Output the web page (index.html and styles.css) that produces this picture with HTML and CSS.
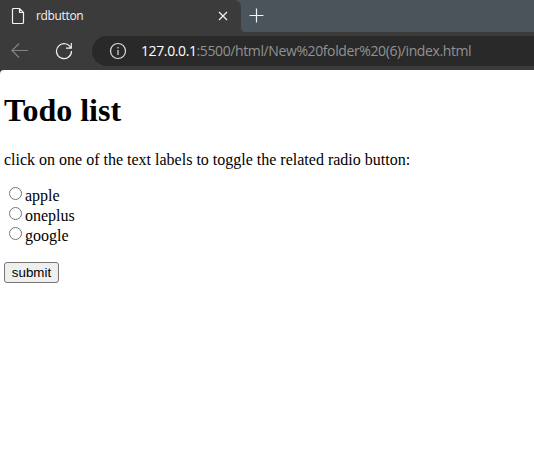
FILE: index.html
```html
<!DOCTYPE html>
<html lang="en">
<head>
<meta charset="utf-8">
<title>rdbutton</title>
<link rel="stylesheet" href="styles.css">
</head>
<body>
<header class="browser">
  <div class="tabs">
    <div class="tab">
      <svg class="file" width="14" height="18" viewBox="0 0 14 18"><path d="M2.5 1.5H8.5L12.5 5.5V15.5Q12.5 16.5 11.5 16.5H2.5Q1.5 16.5 1.5 15.5V2.5Q1.5 1.5 2.5 1.5ZM8.5 1.5V5.5H12.5"/></svg>
      <span class="tab-title">rdbutton</span>
      <svg class="close" width="10" height="10" viewBox="0 0 10 10"><path d="M1 1L9 9M9 1L1 9"/></svg>
    </div>
    <div class="strip">
      <svg class="plus" width="15" height="15" viewBox="0 0 15 15"><path d="M7.5 .5V14.5M.5 7.5H14.5"/></svg>
    </div>
  </div>
  <div class="toolbar">
    <svg class="back" width="18" height="16" viewBox="0 0 18 16"><path d="M17 7.5H1.5M8 .5L1 7.5L8 14.5"/></svg>
    <svg class="reload" width="18" height="18" viewBox="0 0 18 18"><path d="M15.8 6A7.5 7.5 0 1 0 16.5 9M16.3 1V6.2H11"/></svg>
    <div class="address">
      <svg class="info" width="18" height="18" viewBox="0 0 18 18"><circle cx="9" cy="9" r="7.5"/><path d="M9 8V13M9 5V6.5"/></svg>
      <span class="url"><span class="host">127.0.0.1</span>:5500/html/New%20folder%20(6)/index.html</span>
    </div>
  </div>
</header>
<main class="page">
  <h1>Todo list</h1>
  <p>click on one of the text labels to toggle the related radio button:</p>
  <form>
    <label class="option"><input type="radio" name="brand"><span>apple</span></label>
    <label class="option"><input type="radio" name="brand"><span>oneplus</span></label>
    <label class="option"><input type="radio" name="brand"><span>google</span></label>
    <button type="button">submit</button>
  </form>
</main>
</body>
</html>
```
FILE: styles.css
```css
* { box-sizing: border-box; }
body { margin: 0; background: #3b3b3b; height: 468px; overflow: hidden; }
svg { display: block; fill: none; stroke: #f2f2f2; stroke-width: 1.2; flex: none; }
.browser { height: 70px; background: #3b3b3b; font-family: "Open Sans", "Noto Sans", sans-serif; }
.tabs { display: flex; height: 32px; background: linear-gradient(to bottom, #4b545a 16px, #3b3b3b 16px); }
.tab { display: flex; align-items: center; width: 241px; padding-left: 11px; background: #3b3b3b; border-radius: 0 7px 0 0; color: #f2f2f2; }
.tab-title { margin-left: 11px; width: 182px; font-size: 12px; line-height: 16px; letter-spacing: -.35px; }
.strip { flex: 1; padding: 8px 0 0 8px; background: #4b545a; border-radius: 0 0 0 4px; }
.toolbar { display: flex; align-items: center; height: 38px; }
.back { margin-left: 11px; stroke: #838383; }
.reload { margin-left: 26px; }
.address { display: flex; align-items: center; flex: 1; height: 30px; margin-left: 19px; padding-left: 17px; background: #292929; border-radius: 15px 0 0 15px; }
.info { stroke: #dedede; }
.url { margin-left: 14px; font-size: 14px; line-height: 20px; letter-spacing: -.39px; color: #929292; white-space: nowrap; }
.host { color: #fff; }
.page { height: 398px; padding: 24px 4px 0; background: #fff; border-top-left-radius: 4px; color: #000; font: 16px/20px "Liberation Serif", "Times New Roman", serif; }
h1 { margin: 0; font-size: 32px; line-height: 32px; }
p { margin: 24px 0 15px; white-space: nowrap; }
.option { display: flex; align-items: flex-start; height: 20px; }
.option input { width: 13px; height: 13px; margin: 2px 3px 0 5px; }
.option span { padding-top: 1px; }
button { display: block; width: 55px; height: 21px; margin-top: 17px; padding: 0; border: 1px solid #767676; border-radius: 3px; background: #efefef; color: #000; font: 13.333px/17px "Liberation Sans", Arial, sans-serif; }
```
